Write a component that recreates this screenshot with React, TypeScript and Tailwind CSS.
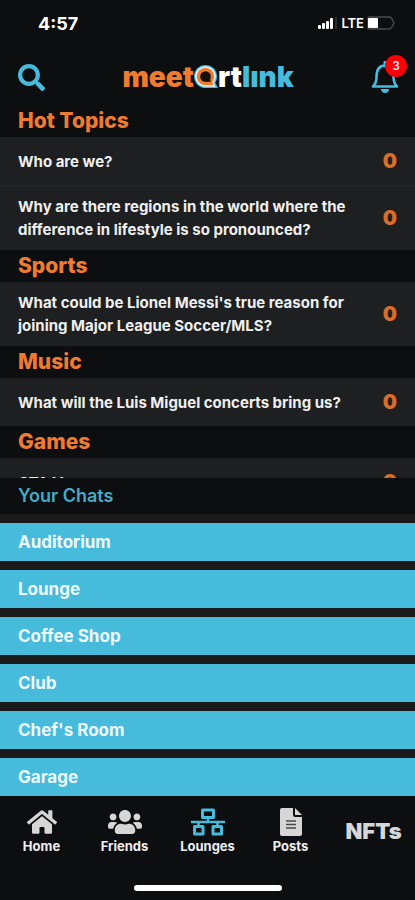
import type { ReactNode } from "react";
import { FaHome, FaSearch, FaUsers } from "react-icons/fa";

type Topic = {
  title: string;
  count: number;
};

type Category = {
  name: string;
  topics: Array<Topic>;
};

const categories: Array<Category> = [
  {
    name: "Hot Topics",
    topics: [
      { title: "Who are we?", count: 0 },
      {
        title:
          "Why are there regions in the world where the difference in lifestyle is so pronounced?",
        count: 0,
      },
    ],
  },
  {
    name: "Sports",
    topics: [
      {
        title:
          "What could be Lionel Messi's true reason for joining Major League Soccer/MLS?",
        count: 0,
      },
    ],
  },
  {
    name: "Music",
    topics: [
      { title: "What will the Luis Miguel concerts bring us?", count: 0 },
    ],
  },
  {
    name: "Games",
    topics: [{ title: "GTA V", count: 0 }],
  },
];

const chats = [
  "Auditorium",
  "Lounge",
  "Coffee Shop",
  "Club",
  "Chef's Room",
  "Garage",
];

const StatusBar = () => (
  <div className="flex h-[46px] shrink-0 items-center justify-between pr-5 pl-[38px] text-white">
    <span className="text-[18px] font-bold">4:57</span>
    <div className="flex items-center gap-[3px]">
      <svg className="h-3 w-5" viewBox="0 0 20 12" aria-hidden>
        <rect x="0" y="8" width="3" height="4" rx="1" fill="#fff" />
        <rect x="4" y="6" width="3" height="6" rx="1" fill="#fff" />
        <rect x="8" y="4" width="3" height="8" rx="1" fill="#fff" />
        <rect x="12" y="1" width="3" height="11" rx="1" fill="#fff" />
        <rect x="17" y="0" width="2" height="12" fill="#2c2d2f" />
      </svg>
      <span className="text-[13px] leading-none font-semibold">LTE</span>
      <svg className="h-[14px] w-7" viewBox="0 0 28 14" fill="none" aria-hidden>
        <path
          d="M2 1h20q2 0 3 2l2 4-2 4q-1 2-3 2H2q-1 0-1-1V2q0-1 1-1z"
          stroke="#4a4b4e"
          strokeWidth="1.5"
        />
        <rect x="1" y="2" width="10" height="10" rx="1" fill="#fff" />
      </svg>
    </div>
  </div>
);

const BellIcon = () => (
  <svg className="h-8 w-7" viewBox="0 0 28 32" fill="none" aria-hidden>
    <path
      d="M2 25.500h24c-2.500-2.500-3.500-5-3.500-9.500 0-6.500-2.500-11.500-8.500-11.500S5.500 9.500 5.500 16c0 4.500-1 7-3.500 9.500z"
      stroke="currentColor"
      strokeWidth="2.600"
      strokeLinejoin="round"
    />
    <path d="M14 1v4" stroke="currentColor" strokeWidth="3" strokeLinecap="round" />
    <path d="M10 28h8c0 2-1.500 4-4 4s-4-2-4-4z" fill="currentColor" />
  </svg>
);

const NetworkIcon = () => (
  <svg
    className="h-7 w-[34px]"
    viewBox="0 0 34 28"
    fill="none"
    stroke="currentColor"
    strokeWidth="3"
    strokeLinejoin="round"
    aria-hidden
  >
    <rect x="11.500" y="2" width="11" height="7.500" />
    <rect x="3.500" y="18.500" width="8.500" height="7.500" />
    <rect x="22" y="18.500" width="8.500" height="7.500" />
    <path d="M0 14h34M17 9v5M7.500 14v5M26.500 14v5" strokeWidth="2.500" />
  </svg>
);

const PostIcon = () => (
  <svg className="h-7 w-[22px]" viewBox="0 0 22 28" aria-hidden>
    <path
      d="M2 0h11v7q0 2 2 2h7v17q0 2-2 2H2q-2 0-2-2V2q0-2 2-2z"
      fill="currentColor"
    />
    <path d="M15 0l7 7h-7z" fill="currentColor" />
    <path d="M6 13h10M6 16.500h10M6 20h10" stroke="#4b4b4c" strokeWidth="1.500" />
  </svg>
);

const Logo = () => (
  <h1 className="flex items-center text-[28px] leading-none font-black text-[#ee7b30]">
    <span>meet</span>
    <svg className="h-6 w-6" viewBox="0 0 24 24" role="img" aria-label="a">
      {/* speech bubble: rim, body and centre, each with its tail */}
      <g fill="#46bbdb">
        <circle cx="11.500" cy="11.500" r="11.500" />
        <path d="M12 23h12l-4-8z" />
      </g>
      <g fill="#f1f7f3">
        <circle cx="11.500" cy="11.500" r="10.300" />
        <path d="M12 21.800h9.500l-3-6z" />
      </g>
      <g fill="#ee7b30">
        <circle cx="11.500" cy="11.500" r="8.700" />
        <path d="M12 20.200h7.500l-2-6z" />
      </g>
      <g fill="#17110e">
        <circle cx="11.500" cy="11.500" r="5.300" />
        <path d="M12 16.800h4.800l-1-4z" />
      </g>
    </svg>
    <span className="text-white">rt</span>
    <span className="text-[#46bbdb]">lınk</span>
  </h1>
);

const Header = () => (
  <header className="flex h-[62px] shrink-0 items-center justify-between pr-4 pl-[18px] text-[#46bbdb]">
    <button type="button" aria-label="Search">
      <FaSearch className="size-[27px]" />
    </button>
    <Logo />
    <button type="button" aria-label="Notifications" className="relative">
      <BellIcon />
      <span className="absolute -top-[6px] -right-2 flex size-[22px] items-center justify-center rounded-full bg-[#fb0007] text-[12px] font-medium text-white">
        3
      </span>
    </button>
  </header>
);

const TopicRow = ({ title, count }: Topic) => (
  <li className="border-b border-[#1f2729] bg-[#1e1f21] last:border-b-0">
    <a
      href="#"
      className="flex min-h-12 items-center justify-between px-[18px] py-[9px]"
    >
      <span className="max-w-[345px] text-[15px] leading-[23px] font-bold text-[#efefef]">
        {title}
      </span>
      <span className="text-[20px] leading-[23px] font-black text-[#d96d2a]">
        {count}
      </span>
    </a>
  </li>
);

type NavItemProps = {
  icon: ReactNode;
  label: string;
  active?: boolean;
};

const NavItem = ({ icon, label, active }: NavItemProps) => (
  <a
    href="#"
    aria-current={active ? "page" : undefined}
    className="flex flex-col items-center gap-[1px]"
  >
    <span className={active ? "text-[#46bbdb]" : "text-[#d6d6d6]"}>{icon}</span>
    <span className="text-[13px] leading-[18px] font-bold text-[#efefef]">
      {label}
    </span>
  </a>
);

const App = () => {
  return (
    <div className="flex h-dvh flex-col overflow-hidden bg-[#0d0e10] font-[Inter,'Liberation_Sans',sans-serif]">
      <StatusBar />
      <Header />

      {/* TOPICS */}
      <main className="-mt-[3px] min-h-0 flex-1 overflow-hidden">
        {categories.map((category) => (
          <section key={category.name}>
            <h2 className="px-[18px] py-[2px] text-[21px] leading-7 font-extrabold text-[#ee7b30]">
              {category.name}
            </h2>
            <ul>
              {category.topics.map((topic) => (
                <TopicRow key={topic.title} {...topic} />
              ))}
            </ul>
          </section>
        ))}
      </main>

      {/* CHATS */}
      <section className="shrink-0">
        <h2 className="px-[18px] py-[6px] text-[18px] leading-6 font-semibold text-[#46a9c8]">
          Your Chats
        </h2>
        <ul className="flex flex-col gap-[9px] bg-[#1a1a1b] pt-[9px]">
          {chats.map((chat) => (
            <li key={chat} className="bg-[#46bbdb]">
              <a
                href="#"
                className="block px-[18px] py-[7px] text-[17px] leading-6 font-bold text-[#eefaff]"
              >
                {chat}
              </a>
            </li>
          ))}
        </ul>
      </section>

      {/* TAB BAR */}
      <nav className="flex shrink-0 flex-col items-center justify-between pt-3 pb-[9px]">
        <div className="grid w-full grid-cols-5">
          <NavItem icon={<FaHome className="h-7 w-[30px]" />} label="Home" />
          <NavItem icon={<FaUsers className="h-7 w-[34px]" />} label="Friends" />
          <NavItem icon={<NetworkIcon />} label="Lounges" active />
          <NavItem icon={<PostIcon />} label="Posts" />
          <a
            href="#"
            className="flex items-center justify-center text-[22px] font-black text-[#d6d6d6]"
          >
            NFTs
          </a>
        </div>
        <div className="mt-[30px] h-[6px] w-[148px] rounded-full bg-white" />
      </nav>
    </div>
  );
};

export default App;
